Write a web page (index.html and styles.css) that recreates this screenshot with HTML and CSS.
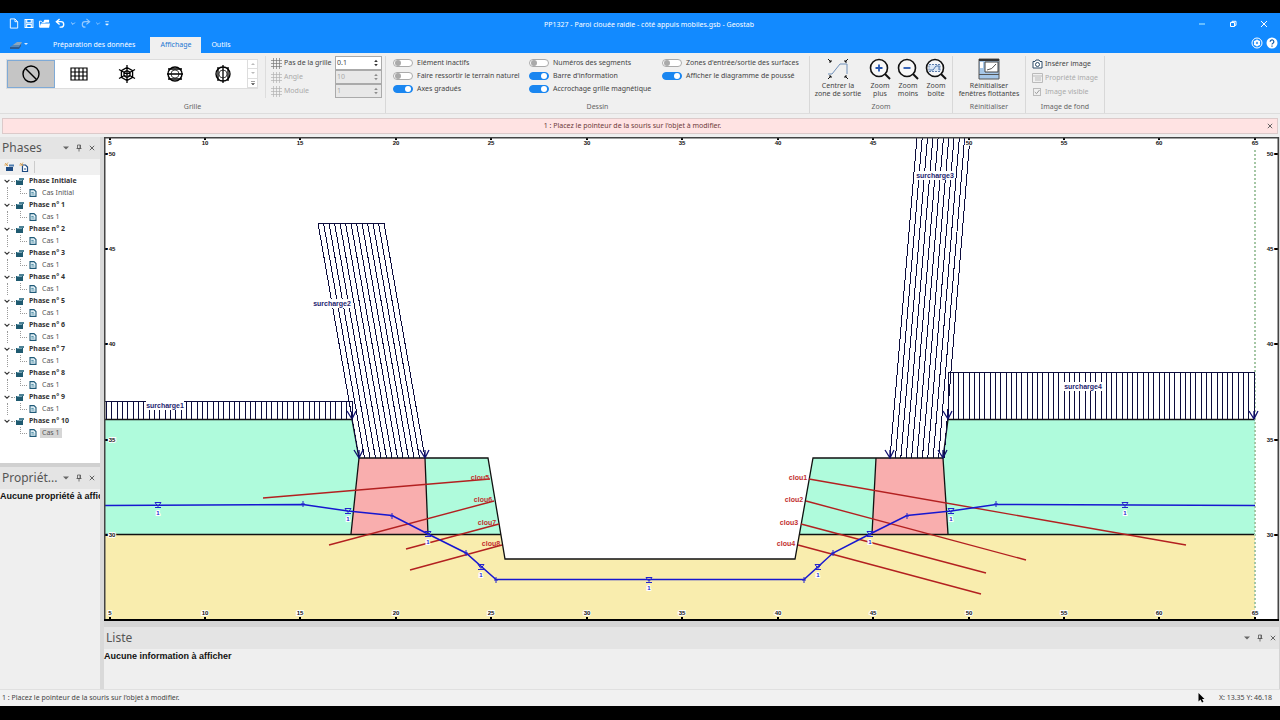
FILE: index.html
```html
<!DOCTYPE html>
<html lang="fr">
<head>
<meta charset="utf-8">
<title>PP1327 - Paroi clouée raidie - côté appuis mobiles.gsb - Geostab</title>
<link rel="stylesheet" href="styles.css">
</head>
<body>
<svg class="defs" aria-hidden="true">
  <symbol id="folder" viewBox="0 0 8 8"><path d="M0 3h7v5H0z" fill="#1f5a70"/><path d="M3 1h5v2H3z" fill="#4d8296"/><path d="M1 3.5h5" stroke="#9cc4d2" stroke-width=".7"/></symbol>
  <symbol id="doc" viewBox="0 0 8 8"><path d="M1 .6h4l2 2v4.8H1z" fill="#e9f5fa" stroke="#1f5a78" stroke-width="1.1"/><path d="M2.3 3.4h2.4M2.3 5h3.2" stroke="#2a7390" stroke-width=".8"/></symbol>
  <symbol id="chev" viewBox="0 0 8 8"><path d="M1.6 2.8L4 5.2l2.4-2.4" fill="none" stroke="#333" stroke-width="1.1"/></symbol>
  <symbol id="tri" viewBox="0 0 8 8"><path d="M1 2.5h6L4 5.5z" fill="#666"/></symbol>
  <symbol id="pin" viewBox="0 0 8 8"><path d="M2.5 1h3v3.5h-3zM1.5 4.5h5M4 4.5V7.5M5 1v3.5" fill="none" stroke="#555" stroke-width=".8"/></symbol>
  <symbol id="x" viewBox="0 0 8 8"><path d="M1.8 1.8l4.4 4.4M6.2 1.8L1.8 6.2" stroke="#555" stroke-width=".9"/></symbol>
  <symbol id="mesh" viewBox="0 0 11 11"><path d="M2.5 0v11M5.5 0v11M8.5 0v11M0 2.5h11M0 5.5h11M0 8.5h11" stroke="#777" stroke-width=".7"/></symbol>
  <symbol id="updown" viewBox="0 0 6 8"><path d="M1.2 3L3 .8 4.8 3zM1.2 5h3.6L3 7.2z" fill="#333"/></symbol>
</svg>
<div class="edge edge-top"></div>
<header class="titlebar">
  <div class="quick">
    <button aria-label="Nouveau"><svg viewBox="0 0 10 12"><path d="M1 1h5l3 3v7H1zM6 1v3h3" fill="none" stroke="#fff"/></svg></button>
    <button aria-label="Enregistrer"><svg viewBox="0 0 10 12"><path d="M.7 1.7h8.6v8.6H.7zM2.5 1.7v3.4h5V1.7M2.5 10.300V7h5v3.300" fill="none" stroke="#fff" stroke-width="1.200"/></svg></button>
    <button class="wide" aria-label="Ouvrir"><svg viewBox="0 0 12 12"><path d="M.5 10V3.500h2L3.500 5H7" fill="none" stroke="#fff"/><path d="M.5 10.500L2 6h10l-1 4.500zM5 3.500L6 2h5v3H5z" fill="#fff"/></svg></button>
    <button class="wide" aria-label="Annuler"><svg viewBox="0 0 12 12"><path d="M5 1L1.500 4 5 7M2 4h4.500a3 3 0 010 6H5" fill="none" stroke="#fff" stroke-width="1.500"/></svg></button>
    <button class="slim" aria-label="Liste annuler"><svg viewBox="0 0 6 12"><path d="M1 5l2 2 2-2" fill="none" stroke="#c6e2ff"/></svg></button>
    <button class="wide faded" aria-label="Rétablir"><svg viewBox="0 0 12 12"><path d="M7 1l3.500 3L7 7M10 4H5.500a3 3 0 000 6H6" fill="none" stroke="#fff" stroke-width="1.300"/></svg></button>
    <button class="slim faded" aria-label="Liste rétablir"><svg viewBox="0 0 6 12"><path d="M1 5l2 2 2-2" fill="none" stroke="#fff"/></svg></button>
    <button class="slim" aria-label="Personnaliser"><svg viewBox="0 0 6 12"><path d="M1 4h4M1.500 6.500h3L3 8z" fill="#fff" stroke="#fff" stroke-width=".7"/></svg></button>
  </div>
  <h1>PP1327 - Paroi clouée raidie - côté appuis mobiles.gsb - Geostab</h1>
  <div class="window">
    <button aria-label="Réduire"><svg viewBox="0 0 8 8"><path d="M1 4h6" stroke="#b7f0ff"/></svg></button>
    <button aria-label="Restaurer"><svg viewBox="0 0 8 8"><path d="M1.500 2.500h4v4h-4zM3 2.500V1.300h4v4H5.500" fill="none" stroke="#fff"/></svg></button>
    <button aria-label="Fermer"><svg viewBox="0 0 8 8"><path d="M1 1l6 6M7 1L1 7" stroke="#fff"/></svg></button>
  </div>
</header>
<nav class="tabs">
  <button class="appmenu" aria-label="Menu"><svg viewBox="0 0 18 10"><path d="M0 7l6-4h6L9 8H0z" fill="#5688b8"/><path d="M3 5l4-3h5l-2 3z" fill="#8ea7bb"/><path d="M0 7h9l2-3v2L9 9H0z" fill="#2d5c91"/><path d="M14 3h4l-2 2z" fill="#d7eaff"/></svg></button>
  <button class="tab">Préparation des données</button>
  <button class="tab active">Affichage</button>
  <button class="tab">Outils</button>
  <span class="grow"></span>
  <button class="round" aria-label="Options"><svg viewBox="0 0 12 12"><circle cx="6" cy="6" r="5" fill="none" stroke="#fff"/><circle cx="6" cy="6" r="2.200" fill="none" stroke="#fff" stroke-width="1.600"/><path d="M6 2.500v7M3 4.200l6 3.600M9 4.200L3 7.800" stroke="#fff" stroke-width="1.200"/><circle cx="6" cy="6" r="1" fill="#1a86f5"/></svg></button>
  <button class="round" aria-label="Aide"><svg viewBox="0 0 12 12"><circle cx="6" cy="6" r="5.500" fill="#fff"/><path d="M4.200 4.700a1.800 1.800 0 113 1.300Q6 6.700 6 7.500M6 8.500V9.700" fill="none" stroke="#135ca8" stroke-width="1.200"/></svg></button>
</nav>
<section class="ribbon">
  <div class="group g-grid">
    <div class="tools">
      <div class="gallery">
        <button class="selected" aria-label="Aucune grille"><svg viewBox="0 0 20 20"><circle cx="10" cy="10" r="8" fill="none" stroke="#000" stroke-width="1.400"/><path d="M4.500 4.500l11 11" stroke="#000" stroke-width="1.400"/></svg></button>
        <button aria-label="Grille carrée"><svg viewBox="0 0 20 20"><path d="M2 4h16v12H2zM2 8h16M2 12h16M6 4v12M10 4v12M14 4v12" fill="none" stroke="#000" stroke-width="1.200"/></svg></button>
        <button aria-label="Grille polaire"><svg viewBox="0 0 20 20"><path d="M10 1v18M2 5.500l16 9M18 5.500l-16 9M10 3.500l5.600 3.200v6.600L10 16.500l-5.600-3.200V6.700zM10 6.500l3 1.700v3.600l-3 1.700-3-1.700V8.200z" fill="none" stroke="#000" stroke-width="1.300"/></svg></button>
        <button aria-label="Grille horizontale"><svg viewBox="0 0 20 20"><circle cx="10" cy="10" r="7" fill="none" stroke="#000" stroke-width="1.400"/><circle cx="10" cy="10" r="4" fill="none" stroke="#000" stroke-width=".7"/><path d="M2 10h16M3 5h14M3 15h14" stroke="#000" stroke-width="1.300"/></svg></button>
        <button aria-label="Grille verticale"><svg viewBox="0 0 20 20"><circle cx="10" cy="10" r="7" fill="none" stroke="#000" stroke-width="1.400"/><circle cx="10" cy="10" r="4" fill="none" stroke="#000" stroke-width=".7"/><path d="M10 1v18M5 3v14M15 3v14" stroke="#000" stroke-width="1.300"/></svg></button>
        <div class="scroller">
          <button aria-label="Monter"><svg viewBox="0 0 6 6"><path d="M1 4h4L3 2z" fill="#bbb"/></svg></button>
          <button aria-label="Descendre"><svg viewBox="0 0 6 6"><path d="M1 2h4L3 4z" fill="#bbb"/></svg></button>
          <button aria-label="Tout afficher"><svg viewBox="0 0 6 6"><path d="M1 1.500h4M1.500 3.500h3L3 5z" fill="#444" stroke="#444" stroke-width=".5"/></svg></button>
        </div>
      </div>
      <div class="params">
        <div class="param"><svg><use href="#mesh"/></svg><label for="pas">Pas de la grille</label><span class="spin"><input id="pas" value="0.1"><svg><use href="#updown"/></svg></span></div>
        <div class="param off"><svg><use href="#mesh"/></svg><label for="angle">Angle</label><span class="spin"><input id="angle" value="10" disabled><svg><use href="#updown"/></svg></span></div>
        <div class="param off"><svg><use href="#mesh"/></svg><label for="module">Module</label><span class="spin"><input id="module" value="1" disabled><svg><use href="#updown"/></svg></span></div>
      </div>
    </div>
    <h2>Grille</h2>
  </div>
  <div class="group g-draw">
    <div class="tools switches">
      <div>
        <label><input type="checkbox">Elément inactifs</label>
        <label><input type="checkbox">Faire ressortir le terrain naturel</label>
        <label><input type="checkbox" checked>Axes gradués</label>
      </div>
      <div>
        <label><input type="checkbox">Numéros des segments</label>
        <label><input type="checkbox" checked>Barre d'information</label>
        <label><input type="checkbox" checked>Accrochage grille magnétique</label>
      </div>
      <div>
        <label><input type="checkbox">Zones d'entrée/sortie des surfaces</label>
        <label><input type="checkbox" checked>Afficher le diagramme de poussé</label>
      </div>
    </div>
    <h2>Dessin</h2>
  </div>
  <div class="group g-zoom">
    <div class="tools">
      <button class="big wide"><svg viewBox="0 0 22 22"><path d="M1 16h4L13 6h7v10" fill="none" stroke="#6f8fb8"/><path d="M1 1l3 3M21 1l-3 3M1 21l3-3M21 21l-3-3M2 4h2V2M18 2v2h2M2 18h2v2M18 20v-2h2" fill="none" stroke="#111"/></svg><span>Centrer la<br>zone de sortie</span></button>
      <button class="big"><svg viewBox="0 0 22 22"><circle cx="10" cy="10" r="8.500" fill="#f8f8f8" stroke="#111" stroke-width="1.600"/><path d="M16 16l5 5" stroke="#111" stroke-width="2"/><path d="M6.500 10h7M10 6.500v7" stroke="#2455b0" stroke-width="1.800"/></svg><span>Zoom<br>plus</span></button>
      <button class="big"><svg viewBox="0 0 22 22"><circle cx="10" cy="10" r="8.500" fill="#f8f8f8" stroke="#111" stroke-width="1.600"/><path d="M16 16l5 5" stroke="#111" stroke-width="2"/><path d="M6.500 10h7" stroke="#2455b0" stroke-width="1.800"/></svg><span>Zoom<br>moins</span></button>
      <button class="big"><svg viewBox="0 0 22 22"><circle cx="10" cy="10" r="8.500" fill="#f8f8f8" stroke="#111" stroke-width="1.600"/><path d="M16 16l5 5" stroke="#111" stroke-width="2"/><path d="M4 6.500h11v7H4z" fill="#dce8f6" stroke="#5f7fae" stroke-dasharray="2 1"/><path d="M5 12h3l3-4h3v4" fill="none" stroke="#4d76ac"/></svg><span>Zoom<br>boîte</span></button>
    </div>
    <h2>Zoom</h2>
  </div>
  <div class="group g-reset">
    <div class="tools">
      <button class="big"><svg viewBox="0 0 22 22"><path d="M1 1h20v20H1z" fill="#a6c7e8" stroke="#555"/><path d="M1 1h20v2H1z" fill="#333"/><path d="M7 4h13v10H7z" fill="#fff" stroke="#444"/><path d="M2 4h3v6H2z" fill="#fff"/><path d="M9 12q5 0 9-6M1 16.500h20" fill="none" stroke="#555"/></svg><span>Réinitialiser<br>fenêtres flottantes</span></button>
    </div>
    <h2>Réinitialiser</h2>
  </div>
  <div class="group g-image">
    <div class="tools stack">
      <button class="row"><svg viewBox="0 0 11 10"><path d="M1 2.500h2L4 1h3l1 1.500h2v6.500H1z" fill="#fff" stroke="#2c4a66"/><circle cx="5.500" cy="5.500" r="2" fill="#fff" stroke="#2c4a66"/></svg>Insérer image</button>
      <button class="row" disabled><svg viewBox="0 0 11 10"><path d="M.5.500h10v9H.5zM.5 3h10M3 5h6M3 7h6" fill="none" stroke="#bbb"/></svg>Propriété image</button>
      <label class="row check"><span class="tick"><input type="checkbox" checked disabled><svg viewBox="0 0 8 8"><path d="M1.800 4l1.700 1.700L6.500 2" fill="none" stroke="#999"/></svg></span>Image visible</label>
    </div>
    <h2>Image de fond</h2>
  </div>
</section>
<div class="notice"><p>1 : Placez le pointeur de la souris sur l'objet à modifier.</p><button aria-label="Fermer"><svg><use href="#x"/></svg></button></div>
<main class="workspace">
  <aside class="side">
    <section class="phases">
      <header class="panelhead"><h3>Phases</h3><button aria-label="Menu"><svg><use href="#tri"/></svg></button><button aria-label="Épingler"><svg><use href="#pin"/></svg></button><button aria-label="Fermer"><svg><use href="#x"/></svg></button></header>
      <div class="treebar">
        <button aria-label="Nouvelle phase"><svg viewBox="0 0 10 10"><path d="M2 5h7v4H2z" fill="#1e4b82"/><path d="M5 2.500h5v2H5z" fill="#4f7cae"/><path d="M1 1l3 3M4 .5L2 3M.3 3H4" stroke="#d79b45" stroke-width=".8"/></svg></button>
        <button aria-label="Nouveau cas"><svg viewBox="0 0 10 10"><path d="M3.500 3h3l2 2v4.500h-5z" fill="#fff" stroke="#1e4b82" stroke-width="1.200"/><path d="M5 7h2" stroke="#1e4b82"/><path d="M1 1l3 3M4 .5L2 3M.3 3H4" stroke="#d79b45" stroke-width=".8"/></svg></button>
        <i class="sep"></i>
      </div>
      <ul class="tree" id="tree"></ul>
    </section>
    <section class="props">
      <header class="panelhead"><h3>Propriét...</h3><button aria-label="Menu"><svg><use href="#tri"/></svg></button><button aria-label="Épingler"><svg><use href="#pin"/></svg></button><button aria-label="Fermer"><svg><use href="#x"/></svg></button></header>
      <p class="empty">Aucune propriété à afficher</p>
    </section>
  </aside>
  <div class="content">
    <svg class="drawing" id="drawing" viewBox="104 137 1175 484" role="img" aria-label="Coupe du terrain">
      <rect x="104" y="137" width="1175" height="484" fill="#fff"/>
      <g class="soil">
        <path class="green" d="M105 420H352L359 458 351 534H105z"/>
        <path class="green" d="M425 458H488L501 534H428z"/>
        <path class="green" d="M813 458H876L872 534H799z"/>
        <path class="green" d="M943 458L948 420H1255V534H948z"/>
        <path class="yellow" d="M105 534H501L505 559H795L799 534H1255V620H105z"/>
        <path class="pink" d="M359 458H425L428 534H351z"/>
        <path class="pink" d="M876 458H943L948 534H872z"/>
      </g>
      <path class="outline" d="M105 419.500H352L359 458H488L505 559H795L813 458H943L948 419.500H1255M105 534.500H501M799 534.500H1255M359 458L351 534M425 458L428 534M876 458L872 534M943 458L948 534"/>
      <path class="limit" d="M1255 150V620"/>
      <g id="loads"></g>
      <g id="nails"></g>
      <path class="water" d="M105 505.500L303 504.500 348 511 392 515.500 428 534 466 553 496 579.500H804L833 553 870 534 907 515.500 951 511 996 504.500 1255 505.500"/>
      <g id="levels"></g>
      <g id="axes"></g>
      <path d="M104.500 621V137.500H1278.500V621" fill="none" stroke="#444" stroke-width="2"/>
      <path d="M104 620H1279" stroke="#000" stroke-width="2"/>
    </svg>
    <section class="list">
      <header class="panelhead"><h3>Liste</h3><button aria-label="Menu"><svg><use href="#tri"/></svg></button><button aria-label="Épingler"><svg><use href="#pin"/></svg></button><button aria-label="Fermer"><svg><use href="#x"/></svg></button></header>
      <p class="empty">Aucune information à afficher</p>
    </section>
  </div>
</main>
<footer class="status"><span>1 : Placez le pointeur de la souris sur l'objet à modifier.</span><span class="grow"></span><svg class="cursor" viewBox="0 0 8 10"><path d="M1.500 0v8.500l2-2 1.500 3 1.500-.8L5 6h2.500z" fill="#000"/></svg><span>X: 13.35 Y: 46.18</span></footer>
<div class="edge edge-bottom"></div>
<script src="script.js"></script>
</body>
</html>
```
FILE: styles.css
```css
* { box-sizing: border-box; }
body { margin: 0; height: 100vh; display: flex; flex-direction: column; overflow: hidden; background: #efefef; color: #444; font: 7px/12px "Noto Sans", sans-serif; }
h1, h2, h3, p, ul { margin: 0; padding: 0; font-weight: 400; }
button, input { font: inherit; color: inherit; }
button { border: 0; padding: 0; background: none; display: flex; align-items: center; justify-content: center; }
svg { display: block; }
.defs { display: none; }
.grow { flex: 1; }
.edge { background: #000; flex: none; }
.edge-top { height: 13px; }
.edge-bottom { height: 14px; }

.titlebar { flex: none; display: grid; grid-template-columns: 1fr auto 1fr; align-items: center; height: 20px; padding: 0 10px 0 8px; background: #128aff; color: #fff; }
.titlebar h1 { font-size: 7px; padding-left: 20px; padding-top: 3px; }
.quick { display: flex; gap: 3px; }
.quick button { width: 12px; }
.quick button.wide { width: 13px; }
.quick button.slim { width: 6px; }
.quick svg { height: 11px; width: 100%; }
.faded { opacity: .55; }
.window { display: flex; justify-content: flex-end; gap: 19px; padding-top: 2px; }
.window button { width: 12px; }
.window svg { width: 8px; height: 8px; }

.tabs { flex: none; display: flex; align-items: flex-end; height: 20px; padding-right: 2px; background: #128aff; color: #fff; }
.tabs button { height: 16px; }
.appmenu { width: 20px; margin: 0 14px 0 9px; }
.appmenu svg { width: 18px; height: 10px; }
.tab { padding: 0 10px; }
.tab.active { margin-left: 5px; background: #f0f0f0; color: #1b76d2; }
.round { width: 12px; margin-left: 3px; padding-bottom: 4px; }
.round svg { width: 12px; height: 12px; }

.ribbon { flex: none; display: flex; height: 61px; padding-top: 3px; background: #f0f0f0; border-bottom: 1px solid #ddd; }
.group { display: flex; flex-direction: column; justify-content: space-between; border-right: 1px solid #d8d8d8; }
.group h2 { font-size: 7px; line-height: 12px; text-align: center; color: #666; }
.tools { display: flex; }
.g-grid { width: 386px; }
.g-grid .tools { justify-content: space-between; padding: 0 3px 0 6px; }
.gallery { display: flex; height: 30px; margin-top: 3px; border: 1px solid #ddd; background: #fff; }
.gallery > button { width: 48px; }
.gallery > button.selected { background: #c5c5c5; border: 1px solid #7faad6; }
.gallery > button svg { width: 20px; height: 20px; }
.scroller { display: flex; flex-direction: column; width: 10px; border-left: 1px solid #ddd; }
.scroller button { flex: 1; border-bottom: 1px solid #ddd; }
.scroller svg { width: 6px; height: 6px; }
.params { padding-left: 5px; border-left: 1px solid #ddd; }
.param { display: flex; align-items: center; height: 14px; }
.param > svg { width: 11px; height: 11px; margin-right: 2px; }
.param label { width: 51px; }
.spin { display: flex; align-items: center; width: 47px; height: 14px; border: 1px solid #aaa; background: #fff; }
.spin input { min-width: 0; flex: 1; border: 0; padding: 0 1px; background: none; line-height: 12px; }
.spin svg { width: 6px; height: 8px; margin-right: 2px; }
.off { color: #aaa; }
.off > svg, .off .spin svg { opacity: .5; }
.off .spin { background: #e8e8e8; }
.g-draw { width: 424px; }
.switches { padding: 0 6px 0 7px; display: grid; grid-template-columns: 136px 133px 1fr; }
.switches label { display: flex; align-items: center; height: 13px; gap: 4px; white-space: nowrap; }
.switches input { appearance: none; flex: none; display: flex; align-items: center; width: 20px; height: 8px; margin: 0; padding: 0 1px; border: 1px solid #aaa; border-radius: 4px; background: #fff; }
.switches input::before { content: ""; width: 6px; height: 6px; border-radius: 50%; background: #aaa; }
.switches input:checked { justify-content: flex-end; border-color: #1a86f0; background: #1a86f0; }
.switches input:checked::before { background: #fff; }
.big { flex-direction: column; justify-content: flex-start; width: 28px; line-height: 8px; }
.big.wide { width: 56px; }
.big svg { width: 22px; height: 22px; margin: 2px 0; }
.big span { white-space: nowrap; }
.g-zoom { width: 143px; }
.g-zoom .big { line-height: 8px; }
.g-reset { width: 73px; }
.g-reset .tools { justify-content: center; }
.g-image { width: 79px; }
.stack { flex-direction: column; padding: 1px 0 0 6px; }
.row { display: flex; justify-content: flex-start; align-items: center; gap: 2px; height: 14px; white-space: nowrap; }
.row svg { width: 11px; height: 10px; }
.row:disabled, .check { color: #aaa; }
.tick { display: grid; width: 8px; height: 8px; margin-right: 2px; margin-left: 1px; }
.tick > * { grid-area: 1 / 1; }
.tick input { appearance: none; width: 8px; height: 8px; margin: 0; border: 1px solid #bbb; }
.tick svg { width: 8px; height: 8px; }

.notice { flex: none; display: flex; align-items: center; height: 16px; margin: 4px 2px 3px; border: 1px solid #dccaca; background: #ffe3e3; color: #6d3a3a; }
.notice p { flex: 1; text-align: center; }
.notice button { width: 15px; }
.notice svg { width: 8px; height: 8px; }

.workspace { flex: 1; min-height: 0; display: flex; gap: 4px; background: #d9d9d9; }
.side { width: 100px; flex: none; display: flex; flex-direction: column; gap: 4px; background: #d0d0d0; }
.phases { flex: none; background: #fff; height: 326px; overflow: hidden; }
.props { flex: 1; background: #efefef; overflow: hidden; }
.panelhead { display: flex; align-items: center; height: 22px; padding: 0 2px; background: #e4e4e4; color: #555; }
.panelhead h3 { flex: 1; font-size: 12px; line-height: 20px; white-space: nowrap; }
.panelhead button { width: 13px; }
.panelhead svg { width: 8px; height: 8px; }
.treebar { display: flex; align-items: center; gap: 5px; height: 16px; padding-left: 4px; background: #f0f0f0; }
.treebar svg { width: 10px; height: 10px; }
.sep { height: 12px; border-left: 1px solid #ccc; }
.tree { list-style: none; }
.tree li { display: flex; align-items: center; height: 12px; }
.tree svg { width: 8px; height: 8px; flex: none; }
.phase { padding-left: 3px; font-weight: 700; color: #333; }
.phase .dash { width: 4px; border-top: 1px dotted #999; margin-right: 1px; }
.phase span { padding-left: 5px; }
.case { padding-left: 7px; color: #555; }
.case .stem { align-self: stretch; width: 13px; border-left: 1px dotted #999; }
.case .elbow { align-self: flex-start; width: 7px; height: 7px; margin-right: 2px; border-left: 1px dotted #999; border-bottom: 1px dotted #999; }
.case span { margin-left: 3px; padding: 0 2px; line-height: 10px; }
.case.current .stem { border-color: transparent; }
.case.current span { background: #d6d6d6; }
.empty { font: 700 9px/14px "Liberation Sans", sans-serif; color: #111; white-space: nowrap; }

.content { flex: 1; min-width: 0; display: flex; flex-direction: column; gap: 6px; padding-right: 1px; background: #d4d4d4; }
.drawing { width: 100%; flex: 1; min-height: 0; }
.list { flex: none; height: 62px; background: #efefef; }
.list .panelhead { padding-right: 0; }
.green { fill: #affbdc; }
.yellow { fill: #f9edae; }
.pink { fill: #f9aeae; }
.outline { fill: none; stroke: #111; stroke-width: 1.3; }
.limit { stroke: #a5c7a5; stroke-width: 2; stroke-dasharray: 2 2; }
.load { fill: none; stroke: #0c0c3c; shape-rendering: crispEdges; }
.arrow { fill: none; stroke: #10106e; stroke-width: 1.3; }
.nail { stroke: #b32020; stroke-width: 1.4; }
.water { fill: none; stroke: #1717d0; stroke-width: 1.5; }
.level { fill: none; stroke: #2323cc; stroke-width: 1; }
.drawing text { font: 700 7px "Liberation Sans", sans-serif; text-anchor: middle; }
.drawing .t-axis { font-size: 6px; fill: #111; paint-order: stroke; stroke: #fff; stroke-width: 2px; }
.drawing .t-load { fill: #24246e; }
.drawing .t-nail { fill: #c22e2e; }
.drawing .t-level { font-size: 6px; fill: #2323cc; paint-order: stroke; stroke: #fff; stroke-width: 2px; }

.status { flex: none; display: flex; align-items: center; height: 17px; padding: 0 8px 0 2px; background: #f1f1f1; border-top: 1px solid #e0e0e0; color: #444; }
.cursor { width: 8px; height: 10px; margin-right: 14px; }
```
FILE: script.js
```js
const NS = "http://www.w3.org/2000/svg";
function add(parent, tag, attrs, text) {
  const el = document.createElementNS(NS, tag);
  for (const key in attrs) el.setAttribute(key, attrs[key]);
  if (text !== undefined) el.textContent = text;
  document.getElementById(parent).appendChild(el);
}

/* Tree of phases, one load case each */
const names = ["Phase Initiale"];
for (let i = 1; i <= 10; i++) names.push("Phase n° " + i);
document.getElementById("tree").innerHTML = names.map((name, i) =>
  `<li class="phase"><svg><use href="#chev"/></svg><i class="dash"></i><svg><use href="#folder"/></svg><span>${name}</span></li>
   <li class="case${i === 10 ? " current" : ""}"><i class="stem"></i><i class="elbow"></i><svg><use href="#doc"/></svg><span>${i ? "Cas 1" : "Cas Initial"}</span></li>`
).join("");

/* Surcharges: top edge x0..x1 at y, bottom edge b0..b1 at yb, n intervals */
const loads = [
  { x0: 101, x1: 352, y: 401, b0: 101, b1: 352, yb: 419, n: 47, name: "surcharge1", tx: 165, ty: 408, arrows: [352] },
  { x0: 318, x1: 384, y: 223, b0: 359, b1: 425, yb: 458, n: 12, name: "surcharge2", tx: 332, ty: 306, arrows: [359, 425] },
  { x0: 917, x1: 970, y: 137, b0: 890, b1: 944, yb: 458, n: 10, name: "surcharge3", tx: 935, ty: 178, arrows: [890, 943] },
  { x0: 948, x1: 1254, y: 372, b0: 948, b1: 1254, yb: 419, n: 58, name: "surcharge4", tx: 1083, ty: 389, arrows: [948, 1254] }
];
for (const l of loads) {
  let d = `M${l.x0} ${l.y + .5}H${l.x1}`;
  for (let i = 0; i <= l.n; i++) {
    const straight = l.x0 === l.b0;
    let t = l.x0 + (l.x1 - l.x0) * i / l.n;
    let b = l.b0 + (l.b1 - l.b0) * i / l.n;
    if (straight) t = b = Math.floor(t) + .5;
    d += `M${t} ${l.y}L${b} ${l.yb}`;
  }
  add("loads", "path", { class: "load", d });
  for (const x of l.arrows) add("loads", "path", { class: "arrow", d: `M${x - 5} ${l.yb - 8}L${x} ${l.yb}L${x + 4} ${l.yb - 8}M${x} ${l.yb}v-8` });
  add("loads", "rect", { x: l.tx - 19, y: l.ty - 7, width: 38, height: 9, fill: "#fff" });
  add("loads", "text", { class: "t-load", x: l.tx, y: l.ty }, l.name);
}

const nails = [
  [809, 479, 1186, 545, 798], [806, 501, 1026, 560, 794], [801, 524, 986, 573, 789], [798, 545, 981, 594, 786],
  [490, 479, 263, 498, 480], [494, 501, 329, 545, 483], [499, 524, 406, 549, 487], [502, 545, 410, 570, 491]
];
nails.forEach(([x1, y1, x2, y2, tx], i) => {
  add("nails", "line", { class: "nail", x1, y1, x2, y2 });
  add("nails", "text", { class: "t-nail", x: tx, y: y1 + 1 }, "clou" + (i + 1));
});

const levels = [[158, 505], [348, 511], [428, 534], [481, 567], [649, 580], [818, 567], [870, 534], [951, 511], [1125, 505]];
for (const [x, y] of levels) {
  add("levels", "path", { class: "level", d: `M${x - 3} ${y - 2.5}h6l-3 4zM${x - 3} ${y + 2.5}h6` });
  add("levels", "text", { class: "t-level", x, y: y + 10 }, "1");
}
for (const [x, y] of [[303, 504], [392, 516], [466, 553], [496, 580], [804, 580], [833, 553], [907, 516], [996, 504]])
  add("levels", "path", { class: "level", d: `M${x - 2} ${y}h4M${x} ${y - 3}v6` });

/* Graduated axes, one label every 5 m */
for (let v = 5; v <= 65; v += 5) {
  const x = Math.round(109.500 + (v - 5) * 19.09);
  add("axes", "path", { d: `M${x} 137v3M${x} 617v3`, stroke: "#000", "stroke-width": 2 });
  add("axes", "text", { class: "t-axis", x, y: 145 }, v);
  add("axes", "text", { class: "t-axis", x, y: 615 }, v);
}
for (let v = 30; v <= 50; v += 5) {
  const y = Math.round(153.500 + (50 - v) * 19.09);
  add("axes", "path", { d: `M105 ${y}h3M1274 ${y}h4`, stroke: "#000", "stroke-width": 2 });
  add("axes", "text", { class: "t-axis", x: 112, y: y + 2 }, v);
  add("axes", "text", { class: "t-axis", x: 1270, y: y + 2 }, v);
}
```
